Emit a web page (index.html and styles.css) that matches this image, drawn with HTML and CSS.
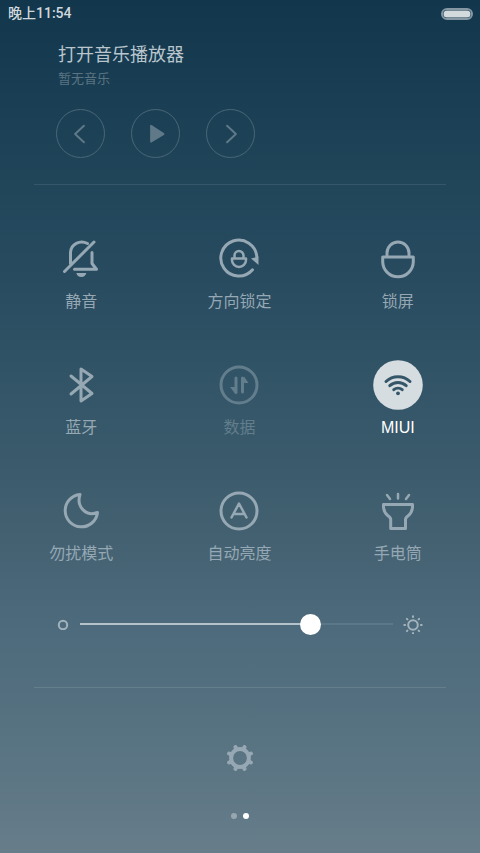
FILE: index.html
```html
<!DOCTYPE html>
<html lang="zh-CN">
<head>
<meta charset="utf-8">
<meta name="viewport" content="width=device-width, initial-scale=1">
<title>控制中心</title>
<link rel="stylesheet" href="styles.css">
</head>
<body>
<header class="status">
  <time>晚上11:54</time>
  <svg class="battery" viewBox="0 0 32 12" aria-hidden="true">
    <rect class="battery-shell" x="1" y="1" width="30" height="10" rx="5"/>
    <rect class="battery-level" x="2.5" y="2.5" width="27" height="7" rx="3.5"/>
  </svg>
</header>
<main>
  <section class="music">
    <h1>打开音乐播放器</h1>
    <p>暂无音乐</p>
    <div class="player">
      <button type="button" aria-label="上一首"><svg viewBox="0 0 48 48"><path d="M27.500 16L18.500 24.500L27.500 33"/></svg></button>
      <button type="button" aria-label="播放"><svg viewBox="0 0 48 48"><path class="solid" d="M18.500 16.500v15.500q0 2 1.800 1L32.500 25.500q1.500-1 0-2L20.300 15.500q-1.800-1-1.800 1z"/></svg></button>
      <button type="button" aria-label="下一首"><svg viewBox="0 0 48 48"><path d="M20.500 16L29.500 24.500L20.500 33"/></svg></button>
    </div>
  </section>
  <section class="tiles">
    <button type="button" class="tile">
      <svg viewBox="0 0 50 50">
        <path d="M36 18.500V29.500l4.500 5.700H18.500M31.500 9.500C24 5.500 14.800 10 14.500 18.500V29.500M8.500 37.500L38 8"/>
        <path class="solid" d="M20.300 39h10q-1 4-5 4t-5-4z"/>
      </svg>
      <span>静音</span>
    </button>
    <button type="button" class="tile">
      <svg viewBox="0 0 50 50">
        <path d="M38.500 35.800A18 18 0 1 1 42.800 23"/>
        <path class="solid" d="M37 24.500L44.500 22.500V31z"/>
        <path class="mid" d="M18 24.500h14v1.500a7 7 0 0 1-14 0zM20.500 24.500v-3a4.500 4.500 0 0 1 9 0v3"/>
      </svg>
      <span>方向锁定</span>
    </button>
    <button type="button" class="tile">
      <svg viewBox="0 0 50 50"><path d="M9.700 23h30.600v4.500a15.300 15.300 0 0 1-30.600 0zM14 23v-4a11 11 0 0 1 22 0v4"/></svg>
      <span>锁屏</span>
    </button>
    <button type="button" class="tile">
      <svg viewBox="0 0 50 50"><path d="M15 16L36 33.500L25 41V9L36 16.500L15 34"/></svg>
      <span>蓝牙</span>
    </button>
    <button type="button" class="tile off">
      <svg viewBox="0 0 50 50">
        <circle cx="25" cy="25" r="18"/>
        <path d="M22 18v14.500M28.500 32V18"/>
        <path class="solid" d="M16 27h5v6.500zM30 16.500L34.500 23H30z"/>
      </svg>
      <span>数据</span>
    </button>
    <button type="button" class="tile on" aria-pressed="true">
      <svg viewBox="0 0 50 50">
        <circle class="disc" cx="25" cy="25" r="24.800"/>
        <path d="M13 21.500a17.500 17.500 0 0 1 24 0M16.800 25.700a12 12 0 0 1 16.400 0M20.800 29.700a6.500 6.500 0 0 1 8.400 0"/>
        <circle class="dot" cx="25" cy="33.300" r="1.900"/>
      </svg>
      <span>MIUI</span>
    </button>
    <button type="button" class="tile">
      <svg viewBox="0 0 50 50"><path d="M24 8.500A16.200 16.200 0 1 0 41.500 26.500C30.500 31 20 21 24 8.500z"/></svg>
      <span>勿扰模式</span>
    </button>
    <button type="button" class="tile">
      <svg viewBox="0 0 50 50"><circle cx="25" cy="25" r="18"/><path class="mid" d="M17.500 31.500L25 17.500L32.500 31.500M20 28h10"/></svg>
      <span>自动亮度</span>
    </button>
    <button type="button" class="tile">
      <svg viewBox="0 0 50 50"><path d="M10.500 18.500h29q.5 7-4 11-3 2-3 4V42.500H17.700V33.500q0-2-3-4-4.700-4-4.200-11z"/><path class="mid" d="M25 8v4.500M14 9l3 4M36 9l-3 4"/></svg>
      <span>手电筒</span>
    </button>
  </section>
  <section class="brightness">
    <svg class="low" viewBox="0 0 12 12" aria-hidden="true"><circle cx="6" cy="7" r="4.200"/></svg>
    <input type="range" min="0" max="255" value="192" aria-label="亮度">
    <svg class="high" viewBox="0 0 20 20" aria-hidden="true">
      <circle cx="10" cy="11" r="4.800"/>
      <path d="M10 2.300v.8M10 18.900v.8M1.300 11h.8M17.900 11h.8M3.900 4.900l.5.5M15.600 16.600l.5.5M3.900 17.100l.5-.5M15.600 5.400l.5-.5"/>
    </svg>
  </section>
</main>
<footer>
  <button type="button" class="settings" aria-label="设置">
    <svg viewBox="-14 -14 28 28">
      <circle r="8.900"/>
      <path d="M-4.500-10.900L-3.800-9.300M4.500-10.900L3.800-9.300M-4.500 10.900L-3.800 9.300M4.500 10.900L3.800 9.300M-10.900-4.500L-9.300-3.800M-10.900 4.500L-9.300 3.800M10.900-4.500L9.300-3.800M10.900 4.500L9.300 3.800"/>
    </svg>
  </button>
  <div class="pages"><i></i><i class="current"></i></div>
</footer>
</body>
</html>
```
FILE: styles.css
```css
* { box-sizing: border-box; }

html { min-height: 100%; }

body {
  margin: 0;
  min-height: 100vh;
  display: flex;
  flex-direction: column;
  background: linear-gradient(#12364c 0%, #21465a 22%, #274a5f 31%, #345668 47%, #426070 62%, #4d6b7c 74%, #587382 87%, #677d8a 100%);
  color: #b9c6ce;
  font-family: "Liberation Sans", "Noto Sans CJK SC", sans-serif;
}

button {
  margin: 0;
  padding: 0;
  border: 0;
  background: none;
  color: inherit;
  font: inherit;
}

svg {
  display: block;
  fill: none;
  stroke: currentColor;
  stroke-linecap: round;
  stroke-linejoin: round;
}

.solid { fill: currentColor; stroke: none; }

.status {
  display: flex;
  align-items: center;
  justify-content: space-between;
  height: 27px;
  padding: 0 7px 0 8px;
  color: #d0d8dd;
  font-family: Roboto, "Noto Sans CJK SC", sans-serif;
  font-size: 14px;
  font-weight: 500;
  line-height: 20px;
}

.status time { padding-bottom: 2px; }

.battery { width: 32px; height: 12px; }
.battery-shell { stroke: #8497a3; stroke-width: 2; }
.battery-level { fill: #d3dade; stroke: none; }

.music {
  margin: 0 34px;
  padding: 16px 24px 26px;
  border-bottom: 1px solid #365769;
}

h1 {
  margin: 0;
  font-size: 18px;
  line-height: 24px;
  font-weight: 400;
}

p {
  margin: 0;
  color: #5a7482;
  font-size: 13px;
  line-height: 24px;
}

.player {
  display: flex;
  gap: 26px;
  margin: 18px 0 0 -2px;
}

.player button {
  width: 49px;
  height: 49px;
  border: 1px solid #4a6778;
  border-radius: 50%;
  color: #5f7988;
}

.player svg { width: 100%; stroke-width: 2; }

.tiles {
  display: grid;
  grid-template-columns: repeat(3, 1fr);
  row-gap: 46px;
  margin: 49px 3px 0 2px;
}

.tile {
  display: flex;
  flex-direction: column;
  align-items: center;
  gap: 6px;
  color: #96a8b3;
  font-size: 16px;
  line-height: 24px;
}

.tile svg { width: 50px; height: 50px; stroke-width: 3; }
.tile .mid { stroke-width: 2.5; }
.off { color: #627d8c; }
.on { color: #fff; }
.on svg { stroke: #345668; }
.disc { fill: #d6dde1; stroke: none; }
.dot { fill: #345668; stroke: none; }

.brightness {
  display: flex;
  align-items: center;
  margin: 47px 34px 0;
  padding: 0 23px 52px;
  color: #a3b3bc;
}

.low { width: 12px; height: 12px; stroke-width: 2; }
.high { width: 20px; height: 20px; stroke-width: 2; }

input {
  appearance: none;
  flex: 1;
  min-width: 0;
  height: 22px;
  margin: 0 10px 0 11px;
  background: linear-gradient(90deg, #b4c2ca 74%, #5b7888 74%) center / 100% 2px no-repeat;
}

input::-webkit-slider-thumb {
  appearance: none;
  width: 21px;
  height: 21px;
  border-radius: 50%;
  background: #fff;
}

footer {
  display: flex;
  flex-direction: column;
  align-items: center;
  margin: 0 34px;
  padding-top: 56px;
  border-top: 1px solid #647e8a;
}

.settings { color: #96a8b3; }
.settings svg { width: 28px; height: 28px; stroke-width: 4; }

.pages {
  display: flex;
  gap: 6px;
  margin: 41px 0 31px;
}

.pages i {
  width: 6px;
  height: 6px;
  border-radius: 50%;
  background: #98a6b0;
}

.pages .current { background: #fff; }
```
